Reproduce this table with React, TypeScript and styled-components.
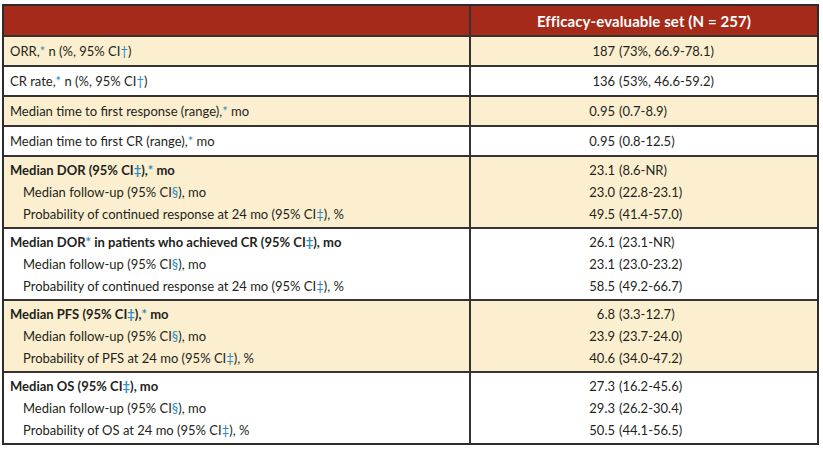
import React from "react";
import styled, { createGlobalStyle } from "styled-components";

const Global = createGlobalStyle`
  html, body { margin: 0; padding: 0; background: #ffffff; }
  body { font-family: Lato, "Noto Sans", sans-serif; color: #231f20; }
`;

const Page = styled.div`
  padding: 4px 4px 0 2px;
`;

const Table = styled.div`
  width: 817px;
  box-sizing: border-box;
  border: 2px solid #2e2c2a;
`;

const Row = styled.div<{ $shade?: boolean; $head?: boolean; $multi?: boolean }>`
  display: grid;
  grid-template-columns: 467px 1fr;
  background: ${(p) => (p.$head ? "#a62a19" : p.$shade ? "#fbefcf" : "#ffffff")};
  border-top: ${(p) => (p.$head ? "0" : "2px solid #35322f")};
  min-height: ${(p) => (p.$head ? "29px" : p.$multi ? "72px" : "30px")};
  box-sizing: border-box;
`;

const LabelCell = styled.div<{ $multi?: boolean }>`
  border-right: 2px solid #35322f;
  padding: ${(p) => (p.$multi ? "2px 0" : "0")};
  display: flex;
  flex-direction: column;
  justify-content: center;
`;

const ValueCell = styled.div<{ $multi?: boolean }>`
  padding: ${(p) => (p.$multi ? "2px 0" : "0")};
  display: flex;
  flex-direction: column;
  justify-content: center;
`;

const HeadTitle = styled.div`
  color: #ffffff;
  font-weight: 700;
  font-size: 15px;
  text-align: center;
  letter-spacing: 0.1px;
`;

const Line = styled.div<{ $indent?: boolean; $bold?: boolean; $multi?: boolean }>`
  height: ${(p) => (p.$multi ? "22px" : "auto")};
  display: flex;
  align-items: center;
  font-size: 13px;
  font-weight: ${(p) => (p.$bold ? 700 : 400)};
  padding-left: ${(p) => (p.$indent ? "19px" : "6px")};
  white-space: nowrap;
`;

const Value = styled.div<{ $multi?: boolean }>`
  height: ${(p) => (p.$multi ? "22px" : "auto")};
  display: grid;
  grid-template-columns: 144px auto;
  column-gap: 4px;
  align-items: center;
  font-size: 13px;
  white-space: nowrap;
`;

const Num = styled.span`
  text-align: right;
`;

const Mark = styled.span`
  color: #2f8cc4;
`;

type Item = { label: React.ReactNode; num: string; rest: string; bold?: boolean; indent?: boolean };
type Group = { shade: boolean; items: Item[] };

const S = () => <Mark>*</Mark>;
const D = () => <Mark>†</Mark>;
const DD = () => <Mark>‡</Mark>;
const SS = () => <Mark>§</Mark>;

const groups: Group[] = [
  { shade: true, items: [{ label: <>ORR,<S /> n (%, 95% CI<D />)</>, num: "187", rest: "(73%, 66.9-78.1)" }] },
  { shade: false, items: [{ label: <>CR rate,<S /> n (%, 95% CI<D />)</>, num: "136", rest: "(53%, 46.6-59.2)" }] },
  { shade: true, items: [{ label: <>Median time to first response (range),<S /> mo</>, num: "0.95", rest: "(0.7-8.9)" }] },
  { shade: false, items: [{ label: <>Median time to first CR (range),<S /> mo</>, num: "0.95", rest: "(0.8-12.5)" }] },
  {
    shade: true,
    items: [
      { label: <>Median DOR (95% CI<DD />),<S /> mo</>, num: "23.1", rest: "(8.6-NR)", bold: true },
      { label: <>Median follow-up (95% CI<SS />), mo</>, num: "23.0", rest: "(22.8-23.1)", indent: true },
      { label: <>Probability of continued response at 24 mo (95% CI<DD />), %</>, num: "49.5", rest: "(41.4-57.0)", indent: true },
    ],
  },
  {
    shade: false,
    items: [
      { label: <>Median DOR<S /> in patients who achieved CR (95% CI<DD />), mo</>, num: "26.1", rest: "(23.1-NR)", bold: true },
      { label: <>Median follow-up (95% CI<SS />), mo</>, num: "23.1", rest: "(23.0-23.2)", indent: true },
      { label: <>Probability of continued response at 24 mo (95% CI<DD />), %</>, num: "58.5", rest: "(49.2-66.7)", indent: true },
    ],
  },
  {
    shade: true,
    items: [
      { label: <>Median PFS (95% CI<DD />),<S /> mo</>, num: "6.8", rest: "(3.3-12.7)", bold: true },
      { label: <>Median follow-up (95% CI<SS />), mo</>, num: "23.9", rest: "(23.7-24.0)", indent: true },
      { label: <>Probability of PFS at 24 mo (95% CI<DD />), %</>, num: "40.6", rest: "(34.0-47.2)", indent: true },
    ],
  },
  {
    shade: false,
    items: [
      { label: <>Median OS (95% CI<DD />), mo</>, num: "27.3", rest: "(16.2-45.6)", bold: true },
      { label: <>Median follow-up (95% CI<SS />), mo</>, num: "29.3", rest: "(26.2-30.4)", indent: true },
      { label: <>Probability of OS at 24 mo (95% CI<DD />), %</>, num: "50.5", rest: "(44.1-56.5)", indent: true },
    ],
  },
];

export default function App() {
  return (
    <Page>
      <Global />
      <Table>
        <Row $head>
          <LabelCell />
          <ValueCell>
            <HeadTitle>Efficacy-evaluable set (N = 257)</HeadTitle>
          </ValueCell>
        </Row>
        {groups.map((g, i) => {
          const multi = g.items.length > 1;
          return (
            <Row key={i} $shade={g.shade} $multi={multi}>
              <LabelCell $multi={multi}>
                {g.items.map((it, j) => (
                  <Line key={j} $bold={it.bold} $indent={it.indent} $multi={multi}>
                    <span>{it.label}</span>
                  </Line>
                ))}
              </LabelCell>
              <ValueCell $multi={multi}>
                {g.items.map((it, j) => (
                  <Value key={j} $multi={multi}>
                    <Num>{it.num}</Num>
                    <span>{it.rest}</span>
                  </Value>
                ))}
              </ValueCell>
            </Row>
          );
        })}
      </Table>
    </Page>
  );
}
